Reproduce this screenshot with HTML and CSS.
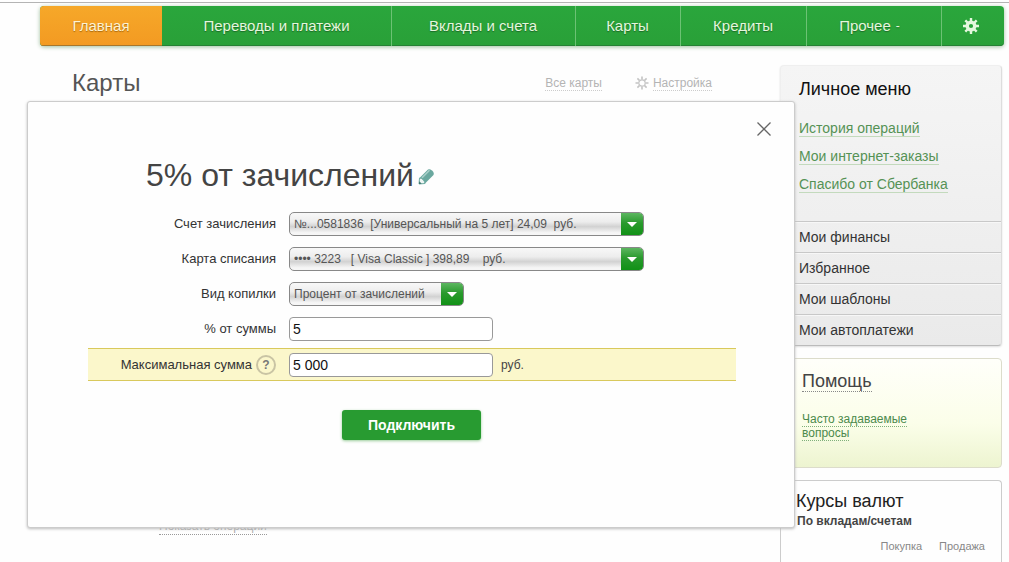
FILE: index.html
```html
<!DOCTYPE html>
<html lang="ru">
<head>
<meta charset="utf-8">
<title>Копилка</title>
<link rel="stylesheet" href="styles.css">
</head>
<body>
<div class="page">
  <nav class="nav">
    <a class="nav-item nav-home" href="#">Главная</a>
    <a class="nav-item nav-payments" href="#">Переводы и платежи</a>
    <a class="nav-item" href="#">Вклады и счета</a>
    <a class="nav-item" href="#">Карты</a>
    <a class="nav-item" href="#">Кредиты</a>
    <a class="nav-item nav-more" href="#">Прочее <span class="nav-dash">-</span></a>
    <a class="nav-item nav-settings" href="#" aria-label="Настройки">
      <svg width="18" height="18" viewBox="0 0 18 18" fill="none" stroke="#e4f7dd">
        <circle cx="9" cy="9" r="3.800" stroke-width="3.400"/>
        <path stroke-width="2.400" d="M9 1v3M9 14v3M1 9h3M14 9h3M3.300 3.300l2.200 2.200M12.500 12.500l2.200 2.200M3.300 14.700l2.200-2.200M12.500 5.500l2.200-2.200"/>
      </svg>
    </a>
  </nav>

  <div class="columns">
    <main class="main">
      <header class="main-head">
        <h1 class="main-title">Карты</h1>
        <a class="faded-link" href="#">Все карты</a>
        <a class="faded-link faded-settings" href="#">
          <svg width="14" height="14" viewBox="0 0 14 14" fill="none" stroke="#c4c4c4">
            <circle cx="7" cy="7" r="3.2" stroke-width="1.2"/>
            <path stroke-width="1.6" d="M7 .5v3M7 10.500v3M.5 7h3M10.500 7h3M2.400 2.400l2 2M9.600 9.600l2 2M2.400 11.600l2-2M9.600 4.400l2-2"/>
          </svg>
          <span class="faded-text">Настройка</span>
        </a>
      </header>
      <a class="show-operations" href="#">Показать операции</a>
    </main>

    <aside class="sidebar">
      <section class="panel personal">
        <h2 class="panel-title">Личное меню</h2>
        <div class="quick-links">
          <a class="green-link" href="#">История операций</a>
          <a class="green-link" href="#">Мои интернет-заказы</a>
          <a class="green-link" href="#">Спасибо от Сбербанка</a>
        </div>
        <a class="menu-row" href="#">Мои финансы</a>
        <a class="menu-row" href="#">Избранное</a>
        <a class="menu-row" href="#">Мои шаблоны</a>
        <a class="menu-row" href="#">Мои автоплатежи</a>
      </section>
      <section class="panel help">
        <a class="help-title" href="#">Помощь</a>
        <p class="help-text"><a class="help-link" href="#">Часто задаваемые<br>вопросы</a></p>
      </section>
      <section class="panel rates">
        <h2 class="rates-title">Курсы валют</h2>
        <h3 class="rates-subtitle">По вкладам/счетам</h3>
        <div class="rates-head"><span>Покупка</span><span>Продажа</span></div>
      </section>
    </aside>
  </div>

  <div class="modal" role="dialog" aria-labelledby="modal-title">
    <button class="close" type="button" aria-label="Закрыть">
      <svg width="16" height="16" viewBox="0 0 16 16" fill="none" stroke="#666" stroke-width="1.300"><path d="M1.500 1.500l13 13M14.500 1.500l-13 13"/></svg>
    </button>
    <div class="title-row">
      <h2 class="modal-title" id="modal-title">5% от зачислений</h2>
      <button class="edit" type="button" aria-label="Изменить">
        <svg width="17" height="17" viewBox="0 0 17 17">
          <path d="M1 16l.5-6L10 1.500q1.500-1 4 1t1.500 4.500L7 15.500z" fill="#6aa89f"/>
          <path d="M1 16l.5-6q4.500.5 5.500 5.500z" fill="#eef5f3" stroke="#6aa89f" stroke-width=".9"/>
          <path d="M4 9.800l7.500-7.500" stroke="#a9d0c9" stroke-width="1.600"/>
          <path d="M1 16l.3-2.700 2.400 2.400z" fill="#39736b"/>
        </svg>
      </button>
    </div>
    <form class="form">
      <div class="row">
        <label class="label" for="account">Счет зачисления</label>
        <span class="select-box select-wide">
          <select class="select" id="account"><option>№...0581836&nbsp; [Универсальный на 5 лет] 24,09&nbsp; руб.</option></select>
          <svg class="arrow" viewBox="0 0 22 22"><path d="M6 9h10l-5 5z" fill="#fff"/></svg>
        </span>
      </div>
      <div class="row">
        <label class="label" for="card">Карта списания</label>
        <span class="select-box select-wide">
          <select class="select" id="card"><option>•••• 3223&nbsp;&nbsp; [ Visa Classic ] 398,89&nbsp;&nbsp;&nbsp; руб.</option></select>
          <svg class="arrow" viewBox="0 0 22 22"><path d="M6 9h10l-5 5z" fill="#fff"/></svg>
        </span>
      </div>
      <div class="row">
        <label class="label" for="kind">Вид копилки</label>
        <span class="select-box select-narrow">
          <select class="select" id="kind"><option>Процент от зачислений</option></select>
          <svg class="arrow" viewBox="0 0 22 22"><path d="M6 9h10l-5 5z" fill="#fff"/></svg>
        </span>
      </div>
      <div class="row">
        <label class="label" for="percent">% от суммы</label>
        <input class="input" id="percent" type="text" value="5">
      </div>
      <div class="row row-active">
        <div class="label">
          <label for="limit">Максимальная сумма</label>
          <button class="hint" type="button" aria-label="Подсказка">?</button>
        </div>
        <input class="input" id="limit" type="text" value="5 000">
        <span class="unit">руб.</span>
      </div>
      <button class="submit" type="button">Подключить</button>
    </form>
  </div>
</div>
</body>
</html>
```
FILE: styles.css
```css
* { box-sizing: border-box; }

body {
  margin: 0;
  background: #fefefe;
  color: #333;
  font: 13px/16px "Liberation Sans", Arial, sans-serif;
}

h1, h2, h3, p { margin: 0; font-weight: normal; }
a { color: inherit; text-decoration: none; }
button, input, select { font-family: inherit; }
svg { display: block; }

.page {
  position: relative;
  display: flex;
  flex-direction: column;
  min-height: 100vh;
  padding-top: 3px;
}

.page::before {
  content: "";
  position: absolute;
  inset: 2px 0 auto;
  height: 1px;
  background: #b4b4b4;
}

/* Top navigation */
.nav {
  display: grid;
  grid-template-columns: 122fr 229fr 184fr 105fr 126fr 135fr 63fr;
  height: 40px;
  margin: 3px 5px 19px 40px;
  border-radius: 4px;
  background: linear-gradient(#2aa63c, #29a038);
  box-shadow: inset 0 -1px #258134, 0 1px 4px #9fbf9f;
  overflow: hidden;
}

.nav-item {
  display: flex;
  align-items: center;
  justify-content: center;
  gap: 5px;
  box-shadow: inset 1px 0 #6cc274;
  color: #e4f7dd;
  font-size: 15px;
  text-shadow: 0 1px 1px #1d6b28;
}

.nav-home {
  background: linear-gradient(#f6a829, #f39a22);
  box-shadow: inset 0 -1px #a7772c;
  color: #fff3d2;
  text-shadow: 0 1px 1px #a8690f;
}
.nav-payments { box-shadow: none; }
.nav-more { padding-right: 8px; }
.nav-settings { padding-right: 4px; }
.nav-dash { font-size: 12px; }

/* Page behind the dialog */
.columns { display: flex; flex: 1; padding-right: 7px; }
.main { flex: 1; display: flex; flex-direction: column; padding: 4px 68px 0 72px; }
.main-head { display: flex; align-items: center; height: 28px; }
.main-title { flex: 1; color: #555; font-size: 24px; line-height: 28px; }
.faded-link { color: #b4b4b4; font-size: 12px; line-height: 14px; border-bottom: 1px dotted #ccc; }
.faded-settings { display: flex; align-items: center; gap: 4px; margin-left: 33px; border-bottom: 0; }
.faded-text { border-bottom: 1px dotted #ccc; }
.show-operations {
  align-self: flex-start;
  margin: 422px 0 0 87px;
  border-bottom: 1px dotted #999;
  color: #aaa;
  font-size: 12px;
  line-height: 15px;
}

/* Sidebar */
.sidebar { display: flex; flex-direction: column; width: 222px; }
.panel { border: 1px solid #ccc; border-radius: 4px; }

.personal {
  margin-bottom: 12px;
  border-color: #efefef #ddd #bbb #efefef;
  background: linear-gradient(#f5f5f5, #eaeaea);
  box-shadow: 0 1px 2px #ddd;
}
.panel-title { padding: 12px 18px 0; color: #111; font-size: 18px; line-height: 22px; }
.quick-links {
  display: flex;
  flex-direction: column;
  align-items: flex-start;
  gap: 12px;
  height: 121px;
  padding: 21px 18px 0;
}
.green-link { border-bottom: 1px solid #c3dabd; color: #559255; font-size: 14px; line-height: 15px; }
.menu-row {
  display: block;
  border-top: 1px solid #c8c8c8;
  box-shadow: inset 0 1px #f7f7f7;
  padding: 7px 18px;
  font-size: 14px;
}

.help {
  margin-bottom: 12px;
  padding: 12px 21px 27px;
  border-color: #dcdccb;
  background: linear-gradient(#fffffa, #fbfee9 60%, #edf4d0);
}
.help-title {
  display: inline-block;
  border-bottom: 1px dotted #888;
  color: #444;
  font-size: 18px;
  line-height: 20px;
}
.help-text { padding-top: 20px; font-size: 12px; line-height: 14px; }
.help-link { border-bottom: 1px dotted #7fb07a; color: #4c8a4c; }

.rates { flex: 1; padding: 9px 16px 0 15px; border-bottom: 0; border-radius: 4px 4px 0 0; }
.rates-title { color: #222; font-size: 18px; line-height: 22px; }
.rates-subtitle { padding-left: 1px; color: #444; font-size: 12px; font-weight: bold; line-height: 18px; }
.rates-head {
  display: flex;
  justify-content: flex-end;
  gap: 17px;
  padding-top: 10px;
  color: #888;
  font-size: 11px;
  line-height: 13px;
}

/* Dialog */
.modal {
  position: absolute;
  top: 101px;
  left: 27px;
  right: 214px;
  padding: 50px 58px 87px 60px;
  border: 1px solid #ccc;
  border-radius: 3px;
  background: #fefefe;
  box-shadow: 0 1px 3px #bbb;
}
.close {
  position: absolute;
  top: 19px;
  right: 22px;
  padding: 0;
  border: 0;
  background: none;
}
.title-row { display: flex; align-items: center; gap: 4px; height: 46px; padding-left: 58px; }
.modal-title { color: #444; font-size: 32px; line-height: 40px; }
.edit { padding: 2px 0 0; border: 0; background: none; }

.form { display: flex; flex-direction: column; padding-top: 8px; }
.row { display: flex; align-items: center; gap: 13px; height: 35px; }
.label { display: flex; justify-content: flex-end; align-items: center; gap: 4px; width: 188px; }

.select-box {
  display: grid;
  grid-template-columns: 1fr 22px;
  height: 24px;
  border: 1px solid #888;
  border-radius: 5px;
  background: linear-gradient(#f8f8f8, #ededed 40%, #d2d2d2 62%, #f6f6f6 90%);
  overflow: hidden;
}
.select-wide { width: 355px; }
.select-narrow { width: 175px; }
.select {
  grid-area: 1 / 1 / 2 / 3;
  appearance: none;
  min-width: 0;
  padding: 0 24px 0 4px;
  border: 0;
  background: none;
  color: #555;
  font-size: 12px;
}
.arrow {
  grid-area: 1 / 2;
  width: 22px;
  height: 22px;
  background: linear-gradient(#5cb660, #2a9a2e 45%, #119116);
  pointer-events: none;
}

.input {
  width: 204px;
  height: 24px;
  padding: 0 3px;
  border: 1px solid #999;
  border-radius: 4px;
  background: #fff;
  color: #111;
  font-size: 14px;
}

.row-active {
  height: 33px;
  margin-top: 2px;
  border: solid #d9c95c;
  border-width: 1px 0;
  background: #fbf7cb;
}
.hint {
  width: 20px;
  height: 20px;
  padding: 0;
  border: 2px solid #c9c4a4;
  border-radius: 50%;
  background: none;
  color: #777;
  font-size: 12px;
  font-weight: bold;
  line-height: 16px;
}
.unit { margin-left: -5px; color: #444; font-size: 12px; }

.submit {
  width: 139px;
  height: 30px;
  margin: 29px 0 0 254px;
  border: 0;
  border-radius: 3px;
  background: #289b31;
  box-shadow: 0 1px 3px #9c9;
  color: #fff;
  font-size: 14px;
  font-weight: bold;
}
```
